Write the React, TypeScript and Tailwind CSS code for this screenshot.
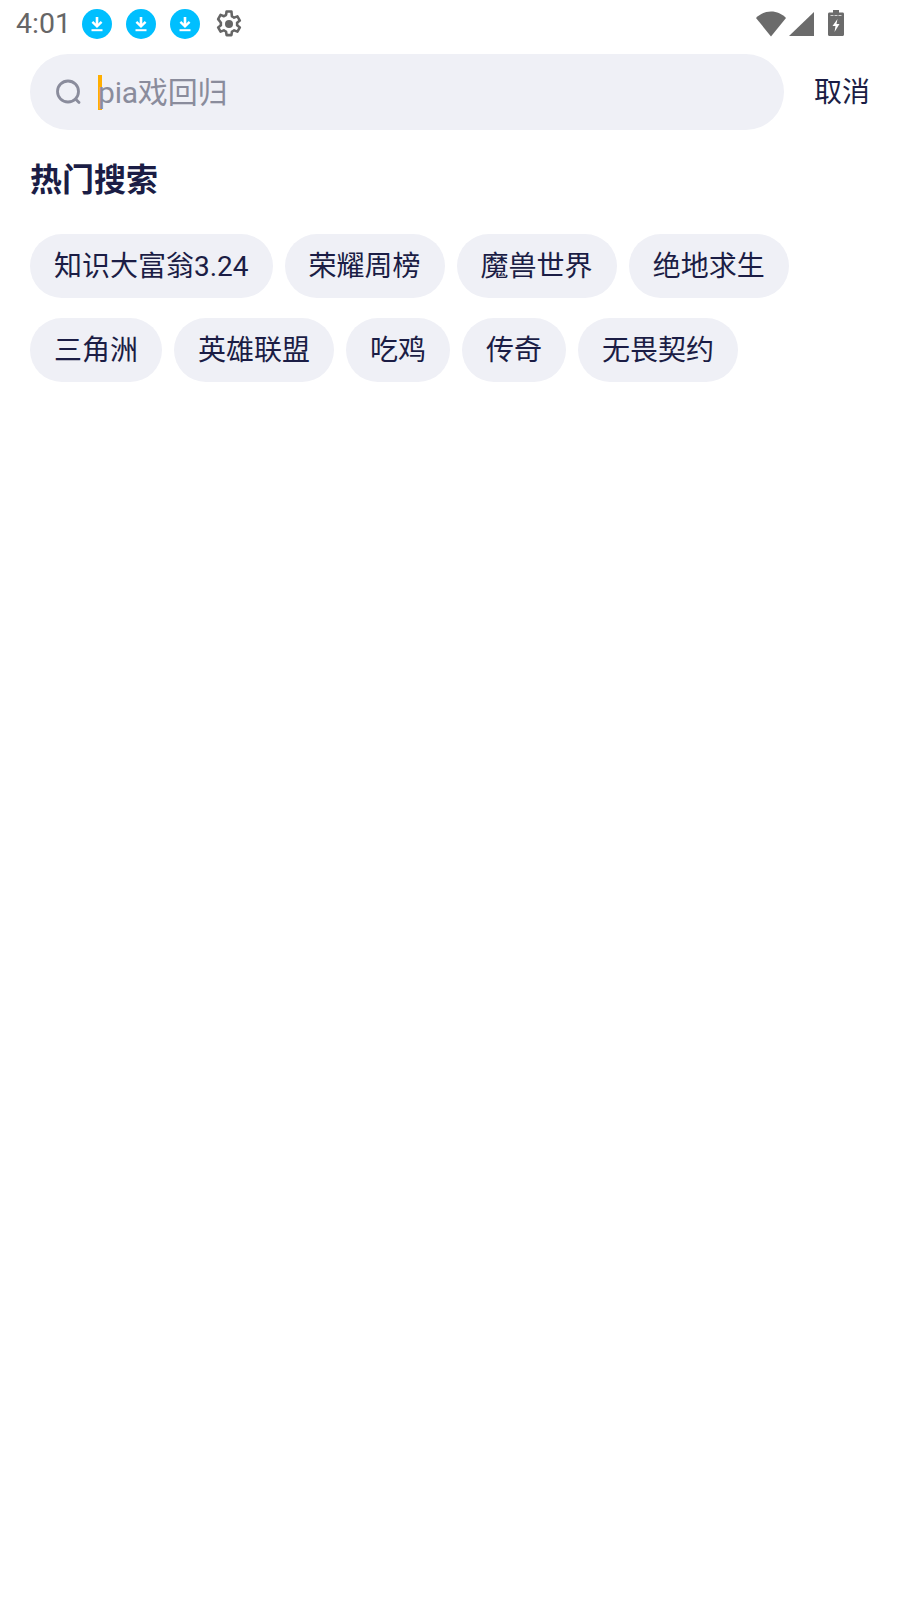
const FONT = "font-['Roboto','Noto_Sans_CJK_SC',sans-serif]";

function Download() {
  return (
    <div className="w-[30px] h-[30px] rounded-full bg-[#00bfff] flex items-center justify-center">
      <svg width="30" height="30" viewBox="0 0 30 30" fill="none" stroke="#fff">
        <path d="M15 8v9" strokeWidth="2.6" />
        <path d="M10.400 12.800l4.600 4.600 4.600-4.600" strokeWidth="2.400" />
        <path d="M9.500 21.200h11" strokeWidth="2" />
      </svg>
    </div>
  );
}

function Gear() {
  return (
    <svg width="30" height="30" viewBox="1.500 1.500 21 21">
      <path
        fill="none"
        stroke="#666"
        strokeWidth="1.800"
        strokeLinejoin="round"
        d="M18.600 12.900c.05-.3.07-.6.07-.9s-.02-.6-.07-.9l1.950-1.520-1.700-2.950-2.300.93a6.700 6.700 0 0 0-1.560-.9L14.650 3.200h-3.400l-.35 2.460c-.56.23-1.080.54-1.560.9l-2.300-.93-1.700 2.950L7.300 11.100c-.05.3-.07.6-.07.9s.02.6.07.9l-1.960 1.520 1.700 2.950 2.300-.93c.48.36 1 .67 1.560.9l.35 2.460h3.400l.35-2.460c.56-.23 1.080-.54 1.560-.9l2.300.93 1.700-2.950Z"
        transform="translate(-0.950 0)"
      />
      <circle cx="12" cy="12" r="2.800" fill="#666" />
    </svg>
  );
}

function Pill({ label }: { label: string }) {
  return (
    <div className="h-16 px-6 pt-px rounded-full bg-[#eff0f6] text-[#1b1d45] text-[28px] leading-[64px] whitespace-nowrap">
      {label}
    </div>
  );
}

const ROW1 = ["知识大富翁3.24", "荣耀周榜", "魔兽世界", "绝地求生"];
const ROW2 = ["三角洲", "英雄联盟", "吃鸡", "传奇", "无畏契约"];

export default function App() {
  return (
    <div className={`w-[900px] h-[1600px] bg-white ${FONT}`}>
      <div className="h-[54px] flex items-start">
        <div className="flex items-center h-[48px] pl-4">
          <span className="text-[28.500px] text-[#666666] leading-none w-[66px]">4:01</span>
          <div className="flex items-center gap-[14px]">
            <Download />
            <Download />
            <Download />
          </div>
          <div className="ml-[14px] flex">
            <Gear />
          </div>
        </div>
        <div className="ml-auto mr-[56px] mt-[10px] flex items-start">
          <svg width="30" height="26" viewBox="0 0 30 26" fill="#6b6b6b" className="mt-px">
            <path d="M0 7C4 3 9 0.500 15 0.500S26 3 30 7L15 25.500Z" />
          </svg>
          <svg width="25" height="24" viewBox="0 0 25 24" fill="#6b6b6b" className="ml-[3px] mt-[2px]">
            <path d="M25 0v24H0Z" />
          </svg>
          <svg width="16" height="26" viewBox="0 0 16 26" className="ml-[14px]">
            <path
              fill="#6b6b6b"
              d="M5 0h6v2.500h3.500c1 0 1.500.6 1.500 1.500v20.500c0 .9-.6 1.500-1.500 1.500h-13C.6 26 0 25.400 0 24.500V4c0-.9.6-1.500 1.500-1.500H5Z"
            />
            <path fill="#fff" d="M9.500 9 4.500 16h3l-1 6 5-8h-3l1-5Z" />
            <path stroke="#fff" strokeWidth="1" d="M2.500 5.500h3M6.500 5.500h3M10.500 5.500h3" opacity="0.7" />
          </svg>
        </div>
      </div>
      <div className="flex items-center pl-[30px]">
        <div className="w-[754px] h-[76px] rounded-full bg-[#eff0f6] flex items-center pl-[24px]">
          <svg width="30" height="30" viewBox="0 0 30 30" fill="none" stroke="#8a8c9c" strokeWidth="2.800">
            <circle cx="14" cy="14.500" r="10.500" />
            <path d="M21.500 22 25 25.500" strokeLinecap="round" />
          </svg>
          <div className="ml-[14px] w-[4px] h-[35px] bg-[#ffae00]" />
          <span className="-ml-[4px] pt-[2px] text-[30px] leading-none tracking-[-0.2px] text-[#8a8c9c]">pia戏回归</span>
        </div>
        <span className="ml-[30px] pt-px text-[28px] leading-none text-[#1b1d45]">取消</span>
      </div>
      <h1 className="mt-[30px] ml-[30px] text-[32px] leading-[40px] font-bold text-[#1b1d45]">热门搜索</h1>
      <div className="mt-[34px] px-[30px] flex flex-col gap-5">
        <div className="flex gap-3">
          {ROW1.map((l) => (
            <Pill key={l} label={l} />
          ))}
        </div>
        <div className="flex gap-3">
          {ROW2.map((l) => (
            <Pill key={l} label={l} />
          ))}
        </div>
      </div>
    </div>
  );
}
